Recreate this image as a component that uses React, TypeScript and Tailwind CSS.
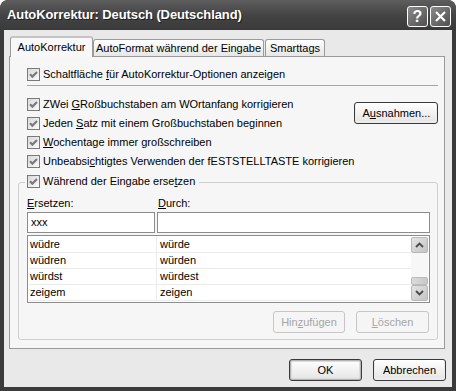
import React from "react";

function Check() {
  return (
    <span className="w-[13px] h-[13px] shrink-0 border border-[#7a7a7a] bg-gradient-to-br from-[#dadada] to-[#fbfbfb] flex items-center justify-center">
      <svg width="11" height="11" viewBox="0 0 11 11">
        <path d="M2 5.2 L4.4 7.6 L9 3" stroke="#7c7c7c" strokeWidth="2.2" fill="none" />
      </svg>
    </span>
  );
}

function Row({ children }: { children: React.ReactNode }) {
  return (
    <div className="h-[19px] flex items-center gap-[3px] whitespace-nowrap">
      <Check />
      <span>{children}</span>
    </div>
  );
}

function Btn({
  children,
  w,
  disabled,
  def,
}: {
  children: React.ReactNode;
  w: string;
  disabled?: boolean;
  def?: boolean;
}) {
  if (disabled) {
    return (
      <div
        className={`${w} h-[22px] rounded-[3px] border border-[#c6c6c6] bg-[#f5f5f5] text-[#a6a6a6] flex items-center justify-center`}
      >
        {children}
      </div>
    );
  }
  return (
    <div
      className={`${w} h-[22px] rounded-[3px] border border-[#3a3a3a] bg-gradient-to-b from-white to-[#e4e4e4] text-black flex items-center justify-center ${
        def ? "shadow-[inset_0_0_0_1px_#b4b4b4,inset_0_0_0_2px_#dcdcdc]" : "shadow-[inset_0_-1px_0_1px_#ececec]"
      }`}
    >
      {children}
    </div>
  );
}

const rows = [
  ["wüdre", "würde"],
  ["wüdren", "würden"],
  ["würdst", "würdest"],
  ["zeigem", "zeigen"],
];

function ArrowBtn({ up }: { up?: boolean }) {
  return (
    <div className="h-[16px] w-full rounded-[2px] border border-[#b8b8b8] bg-gradient-to-br from-[#e4e4e4] to-[#c4c4c4] flex items-center justify-center">
      <svg width="9" height="6" viewBox="0 0 9 6">
        <path
          d={up ? "M1 5 L4.5 1.5 L8 5" : "M1 1 L4.5 4.5 L8 1"}
          stroke="#4a4a4a"
          strokeWidth="1.8"
          fill="none"
        />
      </svg>
    </div>
  );
}

export default function App() {
  return (
    <div className="w-[456px] h-[391px] bg-white">
      <div className="w-[456px] h-[391px] rounded-t-[8px] bg-[#3b3b3b] flex flex-col font-['Liberation_Sans',Arial,sans-serif] text-[11px] text-black overflow-hidden">
        {/* Title bar */}
        <div className="h-[30px] shrink-0 flex items-start justify-between pl-[7px] pr-[5px] bg-gradient-to-b from-[#5e5e5e] via-[#444444] to-[#3a3a3a] rounded-t-[8px]">
          <div className="h-[30px] flex items-center text-white font-bold text-[13px] tracking-[-0.1px] [text-shadow:1px_1px_0_#1e1e1e]">
            AutoKorrektur: Deutsch (Deutschland)
          </div>
          <div className="mt-[6px] flex gap-[2px]">
            <div className="w-[21px] h-[21px] rounded-[3px] border border-white bg-gradient-to-br from-[#8a8a8a] to-[#505050] flex items-center justify-center text-white font-bold text-[16px] leading-none">
              ?
            </div>
            <div className="w-[21px] h-[21px] rounded-[3px] border border-white bg-gradient-to-br from-[#8a8a8a] to-[#505050] flex items-center justify-center">
              <svg width="13" height="13" viewBox="0 0 13 13">
                <path d="M2 2 L11 11 M11 2 L2 11" stroke="white" strokeWidth="2.2" />
              </svg>
            </div>
          </div>
        </div>

        {/* Body */}
        <div className="mx-[4px] mb-[4px] flex-1 bg-[#e9e9e9] pl-[5px] pr-[7px] pt-[6px] flex flex-col">
          {/* Tabs */}
          <div className="h-[20px] flex items-end pl-[1px] whitespace-nowrap">
            <div className="relative z-10 w-[83px] h-[21px] -mb-[1px] rounded-t-[3px] border border-b-0 border-[#9a9a9a] border-t-[#c4c4c4] border-t-2 bg-[#f8f8f8] flex items-center justify-center pb-[1px]">
              AutoKorrektur
            </div>
            <div className="w-[171px] h-[17px] rounded-t-[3px] border border-b-0 border-[#9a9a9a] bg-gradient-to-b from-white to-[#e6e6e6] flex items-center justify-center pt-[1px]">
              AutoFormat während der Eingabe
            </div>
            <div className="ml-[1px] w-[60px] h-[17px] rounded-t-[3px] border border-b-0 border-[#9a9a9a] bg-gradient-to-b from-white to-[#e6e6e6] flex items-center justify-center pt-[1px]">
              Smarttags
            </div>
          </div>

          {/* Panel */}
          <div className="border border-[#9a9a9a] bg-[#f6f6f6] pl-[8px] pr-[6px] pt-[8px] pb-[8px]">
            <div className="ml-[9px]">
              <Row>
                Schaltfläche <u>f</u>ür AutoKorrektur-Optionen anzeigen
              </Row>
            </div>
            <div className="mt-[1px] ml-[9px] h-px bg-[#a6a6a6]" />
            <div className="mt-[9px] ml-[9px] flex">
              <div className="flex-1">
                <Row>
                  ZWei <u>G</u>Roßbuchstaben am WOrtanfang korrigieren
                </Row>
                <Row>
                  Jeden <u>S</u>atz mit einem Großbuchstaben beginnen
                </Row>
                <Row>
                  <u>W</u>ochentage immer großschreiben
                </Row>
                <Row>
                  Unbeabsi<u>c</u>htigtes Verwenden der fESTSTELLTASTE korrigieren
                </Row>
              </div>
              <div className="mt-[7px]">
                <Btn w="w-[84px]">
                  A<u>u</u>snahmen...
                </Btn>
              </div>
            </div>

            {/* Group */}
            <div className="mt-[11px] border border-[#cfcfcf] rounded-[3px] pl-[8px] pr-[7px] pb-[6px]">
              <div className="-mt-[11px] w-fit -ml-[2px] pl-[2px] pr-[4px] bg-[#f6f6f6]">
                <Row>
                  Während der Eingabe erse<u>t</u>zen
                </Row>
              </div>
              <div className="mt-[5px] h-[14px] flex items-center">
                <div className="w-[130px]">
                  <u>E</u>rsetzen:
                </div>
                <div className="pl-[1px]">
                  <u>D</u>urch:
                </div>
              </div>
              <div className="mt-[2px] flex gap-[2px]">
                <div className="w-[128px] h-[21px] border border-[#8c8c8c] bg-white flex items-center pl-[3px]">
                  xxx
                </div>
                <div className="flex-1 h-[21px] border border-[#8c8c8c] bg-white" />
              </div>
              <div className="mt-[2px] h-[68px] border border-[#8c8c8c] bg-white p-[1px] flex">
                <div className="flex-1 flex flex-col">
                  {rows.map(([a, b], i) => (
                    <div key={i} className="h-[16px] flex border-b border-[#ececec]">
                      <div className="w-[128px] pl-[1px] flex items-center border-r border-[#ececec]">{a}</div>
                      <div className="flex-1 pl-[3px] flex items-center">{b}</div>
                    </div>
                  ))}
                </div>
                <div className="w-[17px] bg-[#f7f7f7] flex flex-col">
                  <ArrowBtn up />
                  <div className="flex-1 flex flex-col justify-end">
                    <div className="h-[8px] rounded-[2px] border border-[#bcbcbc] bg-gradient-to-r from-[#dcdcdc] to-[#c8c8c8]" />
                  </div>
                  <ArrowBtn />
                </div>
              </div>
              <div className="mt-[8px] flex justify-end gap-[11px] pr-[1px]">
                <Btn w="w-[72px]" disabled>
                  Hin<u>z</u>ufügen
                </Btn>
                <Btn w="w-[73px]" disabled>
                  <u>L</u>öschen
                </Btn>
              </div>
            </div>
          </div>

          {/* Bottom buttons */}
          <div className="mt-[10px] flex justify-end gap-[11px] -mr-[1px]">
            <Btn w="w-[73px]" def>
              OK
            </Btn>
            <Btn w="w-[73px]">Abbrechen</Btn>
          </div>
        </div>
      </div>
    </div>
  );
}
